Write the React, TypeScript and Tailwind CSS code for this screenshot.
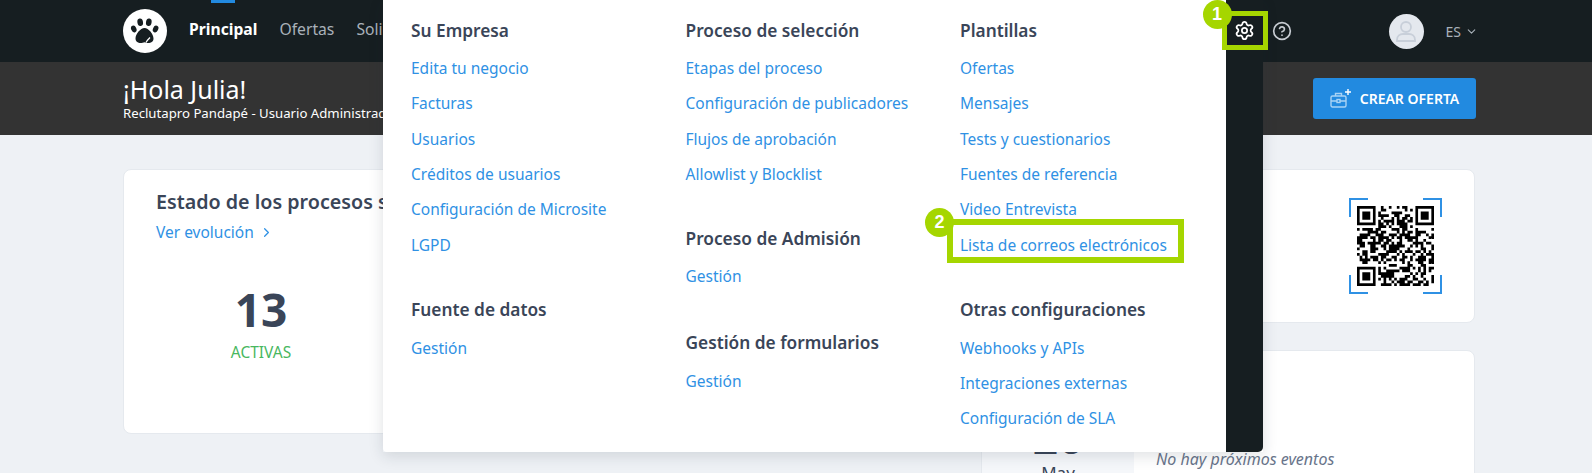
import { ChevronDown, ChevronRight, CircleHelp, Settings } from "lucide-react";

const QR_SIZE = 29;

// fake qr modules, fixed seed so the picture never changes
function qrPath() {
  let seed = 7321;
  let d = "";
  const inBox = (x: number, y: number, bx: number, by: number) =>
    x >= bx && x < bx + 8 && y >= by && y < by + 8;
  const finder = (x: number, y: number, bx: number, by: number) => {
    const dx = x - bx;
    const dy = y - by;
    if (dx === 7 || dy === 7 || dx === -1 || dy === -1) return false;
    if (dx === 0 || dx === 6 || dy === 0 || dy === 6) return true;
    return dx >= 2 && dx <= 4 && dy >= 2 && dy <= 4;
  };
  for (let y = 0; y < QR_SIZE; y++) {
    for (let x = 0; x < QR_SIZE; x++) {
      seed = (seed * 1103515245 + 12345) & 0x7fffffff;
      let on = ((seed >> 12) & 7) < 4;
      if (inBox(x, y, 0, 0)) on = finder(x, y, 0, 0);
      else if (inBox(x, y, 21, 0)) on = finder(x, y, 22, 0);
      else if (inBox(x, y, 0, 21)) on = finder(x, y, 0, 22);
      if (on) d += `M${x} ${y}h1v1h-1z`;
    }
  }
  return d;
}

const columns = [
  [
    { title: "Su Empresa", mb: "mb-[29px]", links: ["Edita tu negocio", "Facturas", "Usuarios", "Créditos de usuarios", "Configuración de Microsite", "LGPD"] },
    { title: "Fuente de datos", mb: "mb-[29px]", links: ["Gestión"] },
  ],
  [
    { title: "Proceso de selección", mb: "mb-[28px]", links: ["Etapas del proceso", "Configuración de publicadores", "Flujos de aprobación", "Allowlist y Blocklist"] },
    { title: "Proceso de Admisión", mb: "mb-[30px]", links: ["Gestión"] },
    { title: "Gestión de formularios", mb: "mb-[29px]", links: ["Gestión"] },
  ],
  [
    { title: "Plantillas", mb: "mb-[29px]", links: ["Ofertas", "Mensajes", "Tests y cuestionarios", "Fuentes de referencia", "Video Entrevista", "Lista de correos electrónicos"] },
    { title: "Otras configuraciones", mb: "mb-[29px]", links: ["Webhooks y APIs", "Integraciones externas", "Configuración de SLA"] },
  ],
];

function PawLogo() {
  return (
    <div className="w-[44px] h-[44px] rounded-full bg-white flex items-center justify-center shrink-0">
      <svg width="30" height="28" viewBox="0 0 30 28" fill="#161e21">
        <ellipse cx="3.8" cy="12" rx="2.6" ry="3.5" transform="rotate(-25 3.8 12)" />
        <ellipse cx="10.2" cy="5.2" rx="2.8" ry="3.8" transform="rotate(-10 10.2 5.2)" />
        <ellipse cx="18.8" cy="5.2" rx="2.8" ry="3.8" transform="rotate(10 18.8 5.2)" />
        <ellipse cx="25.6" cy="12" rx="2.6" ry="3.5" transform="rotate(25 25.6 12)" />
        <path d="M14.5 11c4 0 9 6 9 10.500 0 3.500-3 4.500-5 4.500-1.500 0-3-.8-4-.8s-2.500.8-4 .8c-2.500 0-5-1.500-5-4.500C5.500 17 10.500 11 14.500 11z" />
        <path d="M16 25.500c1-2 2.500-3.500 4-5" stroke="#fff" strokeWidth="1.300" fill="none" />
      </svg>
    </div>
  );
}

function Badge({ n, className }: { n: string; className: string }) {
  return (
    <span className={"absolute w-[29px] h-[29px] rounded-full bg-[#a5d600] text-white text-[18px] font-bold flex items-center justify-center font-['Liberation_Sans',sans-serif] " + className}>
      {n}
    </span>
  );
}

function Menu() {
  return (
    <div className="absolute left-[383px] top-0 w-[880px] h-[452px] flex z-10 shadow-[0_4px_14px_rgba(30,40,60,0.14)]">
      <div className="w-[843px] bg-white rounded-bl-[4px] pl-[28px] pt-[12px] grid grid-cols-[274.500px_274.500px_1fr]">
        {columns.map((col, i) => (
          <div key={i} className="flex flex-col">
            {col.map((group) => (
              <div key={group.title} className={group.mb}>
                <h4 className="h-[39px] pb-[2px] flex items-center text-[17.300px] font-semibold text-[#3a4558] whitespace-nowrap">{group.title}</h4>
                {group.links.map((link) => (
                  <div key={link} className="relative h-[35.300px] flex items-center text-[#2f91e4] text-[15.500px] whitespace-nowrap">
                    {link}
                    {link.startsWith("Lista") && (
                      <>
                        <span className="absolute left-[-13px] top-[-8px] w-[237px] h-[44px] border-[6px] border-[#a5d600]" />
                        <Badge n="2" className="left-[-35px] top-[-19px]" />
                      </>
                    )}
                  </div>
                ))}
              </div>
            ))}
          </div>
        ))}
      </div>
      <div className="w-[37px] bg-[#161e21] rounded-br-[5px]" />
    </div>
  );
}

export default function App() {
  return (
    <main className="relative w-[1592px] h-[473px] overflow-hidden bg-[#eef1f5] font-['Noto_Sans','Open_Sans',sans-serif] text-[#3a4558]">
      <header className="relative h-[62px] bg-[#161e21] pl-[123px] pr-[114px] flex items-center">
        <span className="absolute left-[211px] top-0 w-[24px] h-[3px] bg-[#228ae0]" />
        <PawLogo />
        <nav className="flex items-center gap-[22px] ml-[22px] mb-[2px] text-[15.700px] text-[#a9b1b9]">
          <span className="font-bold text-white">Principal</span>
          <span>Ofertas</span>
          <span>Solicitudes</span>
        </nav>
        <div className="ml-auto flex items-center z-20">
          <div className="relative flex items-center justify-center w-[46px] h-[39px] mr-[4px] mb-[1px]">
            <span className="absolute inset-0 border-[5px] border-[#a5d600]" />
            <Badge n="1" className="left-[-19px] top-[-11px]" />
            <Settings size={21} className="text-white" />
          </div>
          <CircleHelp size={20} className="text-[#c7ccd2] mr-[97px]" />
          <div className="w-[35px] h-[35px] rounded-full bg-[#e4e8ee] flex items-center justify-center mr-[22px]">
            <svg width="22" height="24" viewBox="0 0 22 24" fill="none" stroke="#c8cfd9" strokeWidth="1.800">
              <circle cx="11" cy="8" r="5" />
              <path d="M2 21c0-4 3-6 6-6h6c3 0 6 2 6 6v1H2z" />
            </svg>
          </div>
          <span className="text-[14px] text-[#a9b1b9]">ES</span>
          <ChevronDown size={13} className="text-[#a9b1b9] ml-[4px]" />
        </div>
      </header>

      <section className="h-[73px] bg-[#333333] pl-[123px] pr-[116px] flex items-center justify-between">
        <div className="text-white mb-[1px]">
          <h1 className="text-[25px] leading-[28px]">¡Hola Julia!</h1>
          <p className="text-[13.200px] leading-[16px] mt-[2px]">Reclutapro Pandapé - Usuario Administrador</p>
        </div>
        <button className="w-[163px] h-[41px] bg-[#228ae0] rounded-[3px] text-white text-[14px] font-semibold flex items-center justify-center gap-[8px]">
          <svg width="22" height="22" viewBox="0 0 22 22" fill="none" stroke="#a9d3f5" strokeWidth="1.400">
            <rect x="1" y="8" width="15" height="11" rx="1.500" />
            <path d="M5.500 8V5.500h6V8M1 13h15" />
            <rect x="7" y="11.500" width="3" height="3" fill="#228ae0" />
            <path d="M18 1v6M15 4h6" stroke="#ffffff" />
          </svg>
          CREAR OFERTA
        </button>
      </section>

      <div className="pl-[123px] pr-[117px] pt-[34px] grid grid-cols-[834px_494px] gap-x-[24px] items-start">
        <div className="h-[265px] bg-white rounded-[8px] border border-[#e5e9ee] pl-[32px] pt-[18px]">
          <h2 className="text-[19.700px] font-semibold leading-[28px] whitespace-nowrap">Estado de los procesos selectivos</h2>
          <a className="text-[#2f91e4] text-[15.500px] flex items-center gap-[5px] leading-[32px]">
            Ver evolución <ChevronRight size={15} />
          </a>
          <div className="w-[210px] flex flex-col items-center mt-[33px]">
            <span className="text-[46px] leading-[56px] font-bold">13</span>
            <span className="text-[#48b760] text-[15.500px] leading-[24px] mt-[3px]">ACTIVAS</span>
          </div>
        </div>

        <div className="flex flex-col gap-[27px]">
          <div className="h-[154px] bg-white rounded-[8px] border border-[#e5e9ee] flex items-center justify-end pr-[32px]">
            <div className="relative w-[93px] h-[96px] flex items-center justify-center">
              <span className="absolute left-0 top-0 w-[19px] h-[19px] border-l-2 border-t-2 border-[#2f91e4]" />
              <span className="absolute right-0 top-0 w-[19px] h-[19px] border-r-2 border-t-2 border-[#2f91e4]" />
              <span className="absolute left-0 bottom-0 w-[19px] h-[19px] border-l-2 border-b-2 border-[#2f91e4]" />
              <span className="absolute right-0 bottom-0 w-[19px] h-[19px] border-r-2 border-b-2 border-[#2f91e4]" />
              <svg width="77" height="80" viewBox="0 0 29 29" preserveAspectRatio="none" fill="#000">
                <path d={qrPath()} />
              </svg>
            </div>
          </div>
          <div className="h-[200px] bg-white rounded-[8px] border border-[#e5e9ee] flex">
            <div className="w-[152px] bg-[#f5f7fa] flex flex-col items-center pt-[61px]">
              <span className="text-[44px] leading-[50px] font-bold">26</span>
              <span className="text-[17px] leading-[22px]">May</span>
            </div>
            <p className="pl-[22px] pt-[96px] italic text-[16px] text-[#68748a]">No hay próximos eventos</p>
          </div>
        </div>
      </div>

      <Menu />
    </main>
  );
}
